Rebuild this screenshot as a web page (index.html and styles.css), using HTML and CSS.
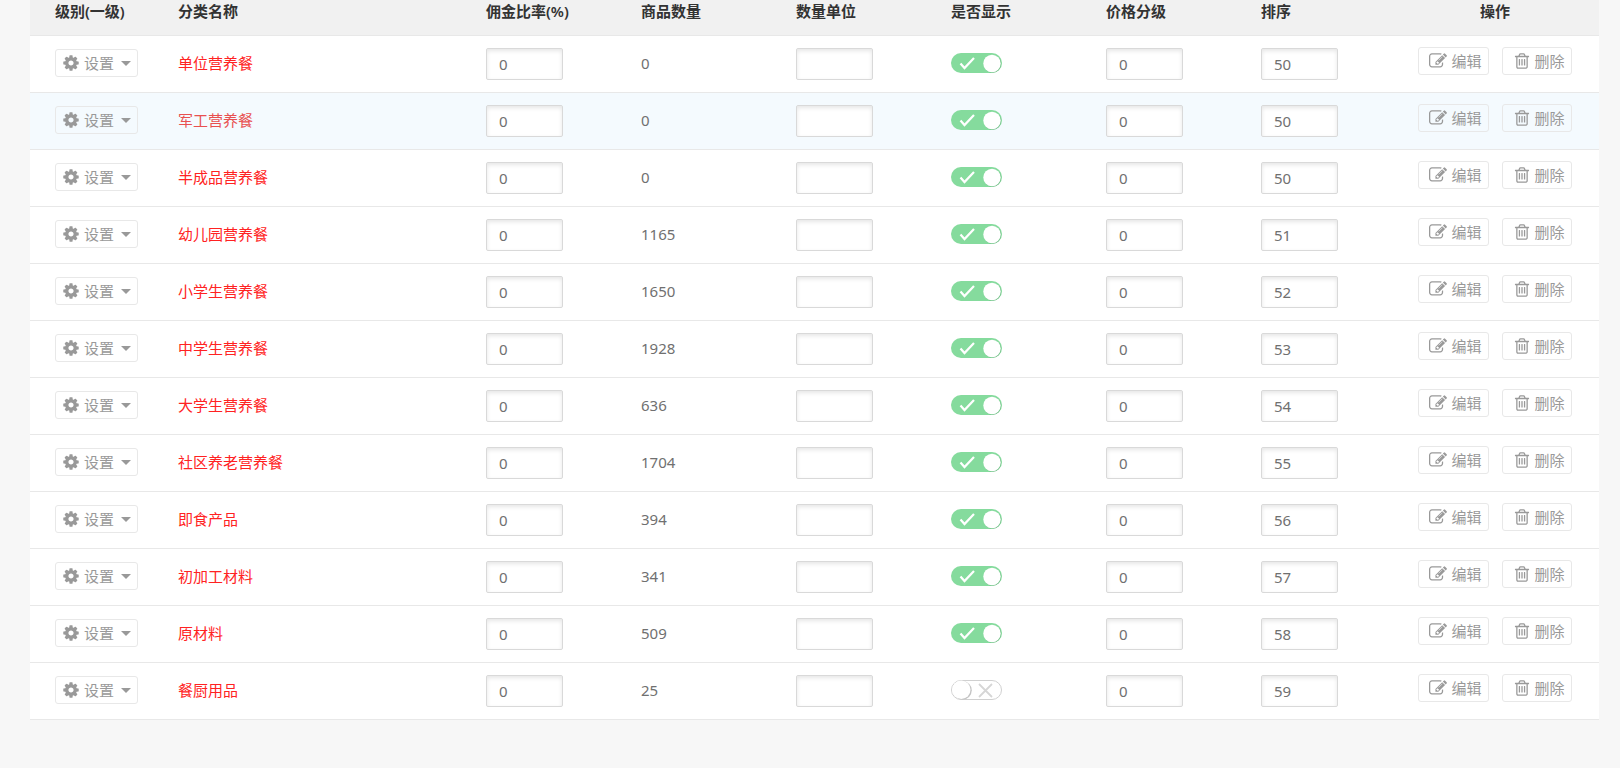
FILE: index.html
```html
<!DOCTYPE html>
<html lang="zh-CN">
<head>
<meta charset="utf-8">
<title>商品分类</title>
<link rel="stylesheet" href="styles.css">
</head>
<body>
<svg class="sprite" aria-hidden="true">
  <symbol id="cog" viewBox="0 0 1792 1792"><path d="M1152 896q0-106-75-181t-181-75-181 75-75 181 75 181 181 75 181-75 75-181zm512-109v222q0 12-8 23t-20 13l-185 28q-19 54-39 91 35 50 107 138 10 12 10 25t-9 23q-27 37-99 108t-94 71q-12 0-26-9l-138-108q-44 23-91 38-16 136-29 186-7 28-36 28h-222q-14 0-24.500-8.500t-11.500-21.500l-28-184q-49-16-90-37l-141 107q-10 9-25 9-14 0-25-11-126-114-165-168-7-10-7-23 0-12 8-23 15-21 51-66.500t54-70.500q-27-50-41-99l-183-27q-13-2-21-12.500t-8-23.500v-222q0-12 8-23t19-13l186-28q14-46 39-92-40-57-107-138-10-12-10-24 0-10 9-23 26-36 98.500-107.500t94.500-71.500q13 0 26 10l138 107q44-23 91-38 16-136 29-186 7-28 36-28h222q14 0 24.500 8.500t11.500 21.500l28 184q49 16 90 37l142-107q9-9 24-9 13 0 25 10 129 119 165 170 7 8 7 22 0 12-8 23-15 21-51 66.500t-54 70.500q26 50 41 98l183 28q13 2 21 12.500t8 23.500z"/></symbol>
  <symbol id="edit" viewBox="0 0 1792 1792"><path d="M888 1184l116-116-152-152-116 116v56h96v96h56zm440-720q-16-16-33 1l-350 350q-17 17-1 33t33-1l350-350q17-17 1-33zm80 594v190q0 119-84.500 203.500t-203.500 84.500h-832q-119 0-203.500-84.500t-84.500-203.500v-832q0-119 84.500-203.500t203.500-84.500h832q63 0 117 25 15 7 18 23 3 17-9 29l-49 49q-14 14-32 8-23-6-45-6h-832q-66 0-113 47t-47 113v832q0 66 47 113t113 47h832q66 0 113-47t47-113v-126q0-13 9-22l64-64q15-15 35-7t20 29zm-96-738l288 288-672 672h-288v-288zm444 132l-92 92-288-288 92-92q28-28 68-28t68 28l152 152q28 28 28 68t-28 68z"/></symbol>
  <symbol id="trash" viewBox="0 0 1792 1792"><path d="M704 736v576q0 14-9 23t-23 9h-64q-14 0-23-9t-9-23v-576q0-14 9-23t23-9h64q14 0 23 9t9 23zm256 0v576q0 14-9 23t-23 9h-64q-14 0-23-9t-9-23v-576q0-14 9-23t23-9h64q14 0 23 9t9 23zm256 0v576q0 14-9 23t-23 9h-64q-14 0-23-9t-9-23v-576q0-14 9-23t23-9h64q14 0 23 9t9 23zm128 724v-948h-896v948q0 22 7 40.500t14.500 27 10.500 8.500h832q3 0 10.500-8.500t14.500-27 7-40.500zm-672-1076h448l-48-117q-7-9-17-11h-317q-10 2-17 11zm928 32v64q0 14-9 23t-23 9h-96v948q0 83-47 143.500t-113 60.500h-832q-66 0-113-58.500t-47-141.500v-952h-96q-14 0-23-9t-9-23v-64q0-14 9-23t23-9h309l70-167q15-37 54-63t79-26h320q40 0 79 26t54 63l70 167h309q14 0 23 9t9 23z"/></symbol>
  <symbol id="on" viewBox="0 0 51 20"><rect width="51" height="20" rx="10" fill="#85db9d"/><path d="M9.500 10.500l4 4.500L23 5" fill="none" stroke="#fff" stroke-width="2.200"/><circle cx="41.500" cy="11" r="8.700" fill="#5fa873" opacity=".6"/><circle cx="41" cy="10.500" r="8.700" fill="#fff"/></symbol>
  <symbol id="off" viewBox="0 0 51 20"><rect x=".5" y=".5" width="50" height="19" rx="9.500" fill="#fff" stroke="#d0d0d0"/><circle cx="11.500" cy="10.300" r="9.300" fill="#c4c4c4"/><circle cx="10.300" cy="9.800" r="9.200" fill="#fff"/><path d="M28 4l13 13M41 4L28 17" fill="none" stroke="#d6d6d6" stroke-width="1.800"/></symbol>
</svg>
<main class="page">
  <table class="list">
    <colgroup>
      <col class="col-level"><col><col class="col-data"><col class="col-data"><col class="col-data"><col class="col-data"><col class="col-data"><col class="col-data"><col class="col-handle">
    </colgroup>
    <thead>
      <tr><th>级别(一级)</th><th>分类名称</th><th>佣金比率(%)</th><th>商品数量</th><th>数量单位</th><th>是否显示</th><th>价格分级</th><th>排序</th><th class="handle">操作</th></tr>
    </thead>
    <tbody id="rows"></tbody>
  </table>
</main>
<script src="script.js"></script>
</body>
</html>
```

FILE: styles.css
```css
* { box-sizing: border-box; }

body {
  margin: 0;
  background: #f7f7f7;
  color: #707070;
  font: 15px/24px "Noto Sans", "Noto Sans CJK SC", sans-serif;
}

.sprite { display: none; }

.page { padding: 0 21px 40px 30px; }

.list {
  width: 100%;
  table-layout: fixed;
  border-collapse: separate;
  border-spacing: 0;
  background: #fff;
}

.col-level { width: 123px; }
.col-data { width: 155px; }
.col-handle { width: 208px; }

th, td {
  padding: 0 0 2px 25px;
  border-bottom: 1px solid #e8e8e8;
  text-align: left;
  vertical-align: middle;
  white-space: nowrap;
}

th {
  height: 36px;
  padding-bottom: 13px;
  background: #f1f1f1;
  color: #333;
  font-weight: 600;
  line-height: 22px;
}

td { height: 57px; }
td.entry { padding-bottom: 0; }

th.handle { padding-left: 0; text-align: center; }
td.handle { padding: 0 0 6px; }

.current td { background: #f4fafe; }

.name { color: #f22; text-decoration: none; }
.current .name { color: #e85050; }

.field {
  display: block;
  width: 77px;
  height: 32px;
  padding: 0 12px;
  border: 1px solid #d9d9d9;
  border-radius: 2px;
  background: #fff;
  box-shadow: inset 0 2px 4px rgba(0, 0, 0, .1);
  color: #707070;
  font: inherit;
}

.btn {
  display: flex;
  align-items: center;
  gap: 4px;
  height: 28px;
  padding: 0 6px 0 10px;
  border: 1px solid #e8e8e8;
  border-radius: 3px;
  background: none;
  color: #999;
  font: inherit;
  text-decoration: none;
}

.btn-set { padding: 0 6px; }

.btn svg { width: 18px; height: 18px; fill: currentColor; }

.caret {
  margin-left: 3px;
  border: 5px solid transparent;
  border-top-color: #999;
  border-bottom: 0;
}

.actions { display: flex; justify-content: center; gap: 13px; }

.switch { display: block; position: relative; width: 51px; height: 20px; }
.switch input { position: absolute; inset: 0; width: 100%; height: 100%; margin: 0; opacity: 0; cursor: pointer; }
.switch svg { display: block; width: 51px; height: 20px; }
.switch input:checked ~ .off { display: none; }
.switch input:not(:checked) ~ .on { display: none; }
```

FILE: script.js
```js
const categories = [
  ["单位营养餐", 0, 50], ["军工营养餐", 0, 50], ["半成品营养餐", 0, 50],
  ["幼儿园营养餐", 1165, 51], ["小学生营养餐", 1650, 52], ["中学生营养餐", 1928, 53],
  ["大学生营养餐", 636, 54], ["社区养老营养餐", 1704, 55], ["即食产品", 394, 56],
  ["初加工材料", 341, 57], ["原材料", 509, 58], ["餐厨用品", 25, 59, false]
];

const icon = (id, cls = "") => `<svg class="${cls}" aria-hidden="true"><use href="#${id}"/></svg>`;
const field = (label, value) => `<td class="entry"><input class="field" type="text" aria-label="${label}" value="${value}"></td>`;

document.getElementById("rows").innerHTML = categories.map(([name, count, order, shown = true], i) => `
  <tr class="${i === 1 ? "current" : ""}">
    <td><button class="btn btn-set" type="button">${icon("cog")}<span>设置</span><i class="caret"></i></button></td>
    <td><a class="name" href="#">${name}</a></td>
    ${field("佣金比率", 0)}
    <td>${count}</td>
    ${field("数量单位", "")}
    <td><label class="switch"><input type="checkbox" aria-label="是否显示"${shown ? " checked" : ""}>${icon("on", "on")}${icon("off", "off")}</label></td>
    ${field("价格分级", 0)}
    ${field("排序", order)}
    <td class="handle"><div class="actions"><a class="btn" href="#">${icon("edit")}<span>编辑</span></a><a class="btn" href="#">${icon("trash")}<span>删除</span></a></div></td>
  </tr>`).join("");
```
